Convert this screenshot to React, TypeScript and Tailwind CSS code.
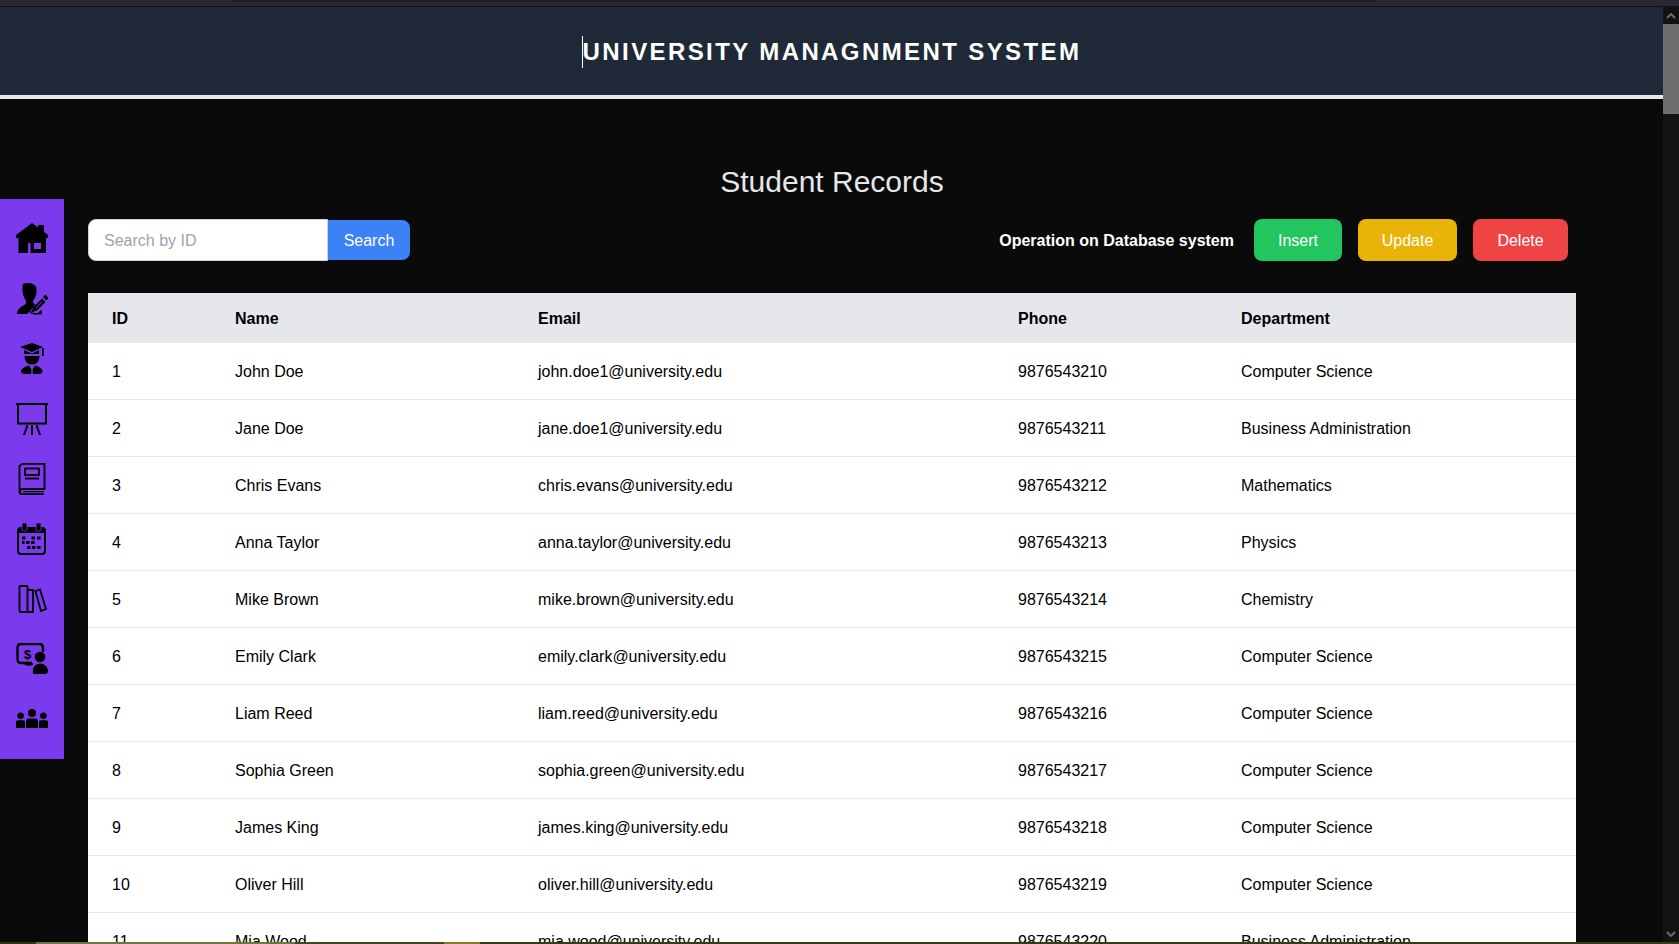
import type { ReactNode } from "react";

const students = [
  ["1", "John Doe", "john.doe1@university.edu", "9876543210", "Computer Science"],
  ["2", "Jane Doe", "jane.doe1@university.edu", "9876543211", "Business Administration"],
  ["3", "Chris Evans", "chris.evans@university.edu", "9876543212", "Mathematics"],
  ["4", "Anna Taylor", "anna.taylor@university.edu", "9876543213", "Physics"],
  ["5", "Mike Brown", "mike.brown@university.edu", "9876543214", "Chemistry"],
  ["6", "Emily Clark", "emily.clark@university.edu", "9876543215", "Computer Science"],
  ["7", "Liam Reed", "liam.reed@university.edu", "9876543216", "Computer Science"],
  ["8", "Sophia Green", "sophia.green@university.edu", "9876543217", "Computer Science"],
  ["9", "James King", "james.king@university.edu", "9876543218", "Computer Science"],
  ["10", "Oliver Hill", "oliver.hill@university.edu", "9876543219", "Computer Science"],
  ["11", "Mia Wood", "mia.wood@university.edu", "9876543220", "Business Administration"],
];

function Icon({ children }: { children: ReactNode }) {
  return (
    <div className="flex h-[60px] items-center justify-center">
      <svg viewBox="0 0 32 32" className="h-8 w-8">
        {children}
      </svg>
    </div>
  );
}

const purple = "#7c3aed";

const sidebarIcons = [
  <Icon key="home">
    <path
      fillRule="evenodd"
      d="M16 0 L22 4.5 V2 H28 V9 L32 12 V15 H30 V30 H2.5 V15 H0 V12 Z M18 20 V26 H25 V20 Z M12 20 V30 H14.5 V20 Z"
    />
  </Icon>,
  <Icon key="user-pen">
    <path d="M7 1 C10 -0.5 18 -0.5 20 4 C21.5 8 20 14 17.5 17 C16.5 19 17 20.5 19 21.5 C23 23 26 25 26 31 H1 C1 26 5 24 9 21.5 C10.5 20.5 10.5 18.5 9.5 17 C7 13 5.5 7 7 1 Z" />
    <path d="M14 33 L33 14" stroke={purple} strokeWidth="7" fill="none" />
    <path d="M15 29.5 L17.5 24.5 L26 15.5 L29.5 19 L21 27.5 Z" />
    <path d="M27 14 L29.5 11.5 L32.5 15 L30.5 17.5 Z" />
    <path d="M14.5 28 C14 31 19 31 26 30.5" stroke="black" strokeWidth="1.4" fill="none" />
    <path d="M20 25 L25.5 19" stroke={purple} strokeWidth="1" />
  </Icon>,
  <Icon key="student">
    <path d="M16 0 L27 4 L16 9 L4 4 Z" />
    <path d="M26 5 H27.8 V13 H26 Z" />
    <path d="M8 7 L16 10.5 L23 7 V11 H8 Z" />
    <path d="M8.5 13 H23.5 C23.5 18 20.5 21.5 16 21.5 C11.5 21.5 8.5 18 8.5 13 Z" />
    <path d="M5 28.5 C5 25 10 23 13 22.5 L15.3 26 V31 H10 C7 31 5 30 5 28.5 Z" />
    <path d="M26.5 28.5 C26.5 25 22 23 19 22.5 L16.7 26 V31 H22 C25 31 26.5 30 26.5 28.5 Z" />
  </Icon>,
  <Icon key="board">
    <g fill="none" stroke="black" strokeWidth="2">
      <path d="M0 1 H32" />
      <path d="M2 1 V20.5 H30 V1" />
      <path d="M16 22 V32 M11.5 22 L8 32 M20.5 22 L24 32" />
    </g>
  </Icon>,
  <Icon key="book">
    <g fill="none" stroke="black" strokeWidth="1.8">
      <path d="M6 0.9 H28.5 V26 H7 C4.5 26 3.5 28 3.5 29 C3.5 30.5 5 31.2 7 31.2 H28" />
      <path d="M3.5 29 V3 L6 0.9" />
      <path d="M7 28.6 H28" strokeWidth="1.2" />
      <rect x="9" y="5.5" width="14" height="6.5" />
    </g>
    <path d="M9 14.5 H23 V16.5 H9 Z" />
  </Icon>,
  <Icon key="calendar">
    <rect x="2" y="5" width="27" height="26" rx="3" fill="none" stroke="black" strokeWidth="2" />
    <path d="M2 5 H29 V10 H2 Z" />
    <rect x="6" y="0" width="5" height="8" rx="1.5" stroke={purple} strokeWidth="0.8" />
    <rect x="20" y="0" width="5" height="8" rx="1.5" stroke={purple} strokeWidth="0.8" />
    <path d="M6 13.5 h3.5 v3 h-3.5 Z M15.5 13.5 h3.5 v3 h-3.5 Z M21 13.5 h3.5 v3 h-3.5 Z M10 18 h3.5 v3 h-3.5 Z M15 18 h3.5 v3 h-3.5 Z M6 18 h2.5 v3 h-2.5 Z M11 23 h3.5 v3 h-3.5 Z M16 23 h3.5 v3 h-3.5 Z M21 23 h3.5 v3 h-3.5 Z" />
  </Icon>,
  <Icon key="books">
    <g fill="none" stroke="black" strokeWidth="1.8">
      <rect x="3.5" y="3" width="8" height="26" rx="1" />
      <path d="M12 7 H17 V29 H12" />
      <path d="M19.5 8 L24 6.5 L30 26 L25 28 Z" />
    </g>
  </Icon>,
  <Icon key="finance">
    <path d="M27 9 V5 C27 2.5 26 1 24 1 H5 C3 1 1.5 2.5 1.5 5 V16 C1.5 18.5 3 20 5 20 H16" fill="none" stroke="black" strokeWidth="2.4" />
    <path d="M8 20 H17 V22 C14 23 11 23 9 22 Z" />
    <text x="8" y="15.5" fontFamily="Liberation Sans, sans-serif" fontSize="13" fontWeight="700">
      $
    </text>
    <circle cx="24" cy="14" r="5.3" />
    <path d="M17 30 C16 24 20 20.5 24 20.5 C28 20.5 32 24 32 28 C32 30 31 31 29 31 H19 C18 31 17.3 31 17 30 Z" />
  </Icon>,
  <Icon key="group">
    <circle cx="16" cy="10" r="4" />
    <path d="M10 25 V18 C10 16 12 15.5 13 15.5 H19 C20 15.5 22 16 22 18 V25 Z" />
    <circle cx="4.6" cy="12.7" r="3.3" />
    <path d="M0 25 V19 C0 18 1 17.2 2 17.2 H7 C8 17.2 9 18 9 19 V25 Z" />
    <circle cx="27.4" cy="12.7" r="3.3" />
    <path d="M23 25 V19 C23 18 24 17.2 25 17.2 H30 C31 17.2 32 18 32 19 V25 Z" />
  </Icon>,
];

export default function App() {
  return (
    <div className="flex h-screen flex-col overflow-hidden bg-[#0a0a0a] font-['Liberation_Sans',Arial,sans-serif] text-black">
      <div className="h-[7px] shrink-0 border-b border-[#111111] bg-[#2b2833]">
        <div className="ml-[232px] h-[2px] w-[1144px] rounded-b bg-[#1f1e24]" />
      </div>

      <div className="flex min-h-0 flex-1">
        <div className="flex min-w-0 flex-1 flex-col">
          <header className="flex h-[92px] shrink-0 items-center justify-center border-b-4 border-[#e5e7eb] bg-[#1f2937] pt-[2px]">
            <h1 className="border-l border-white text-2xl font-bold tracking-[0.1em] text-white">
              UNIVERSITY MANAGNMENT SYSTEM
            </h1>
          </header>

          <div className="flex min-h-0 flex-1 overflow-hidden">
            <aside className="mt-[100px] h-[560px] w-16 shrink-0 bg-[#7c3aed] py-[10px]">{sidebarIcons}</aside>

            <main className="min-w-0 flex-1 pl-6 pr-[87px] pt-[65px]">
              <h2 className="mb-[19px] text-center text-3xl text-[#e5e7eb]">Student Records</h2>

              <div className="mb-8 flex items-center justify-between pr-2">
                <div className="flex items-center">
                  <input
                    placeholder="Search by ID"
                    className="h-[42px] w-60 rounded-l-lg border border-[#d1d5db] bg-white pl-[15px] pr-4 pt-[2px] text-base outline-none placeholder:text-[#9ca3af]"
                  />
                  <button className="h-10 w-[82px] rounded-r-lg bg-[#3b82f6] pt-[2px] text-base text-white">Search</button>
                </div>
                <div className="flex items-center gap-4">
                  <span className="mr-1 pt-[2px] text-base font-bold text-white">Operation on Database system</span>
                  <button className="h-[42px] w-[88px] rounded-lg bg-[#22c55e] pt-[2px] text-base text-white">Insert</button>
                  <button className="h-[42px] w-[99px] rounded-lg bg-[#eab308] pt-[2px] text-base text-white">Update</button>
                  <button className="h-[42px] w-[95px] rounded-lg bg-[#ef4444] pt-[2px] text-base text-white">Delete</button>
                </div>
              </div>

              <table className="w-full table-fixed border-collapse bg-white text-left text-base">
                <colgroup>
                  <col className="w-[123px]" />
                  <col className="w-[303px]" />
                  <col className="w-[480px]" />
                  <col className="w-[223px]" />
                  <col />
                </colgroup>
                <thead className="bg-[#e5e7eb]">
                  <tr>
                    {["ID", "Name", "Email", "Phone", "Department"].map((h) => (
                      <th key={h} className="px-6 pb-3 pt-[14px] font-bold">
                        {h}
                      </th>
                    ))}
                  </tr>
                </thead>
                <tbody>
                  {students.map((row) => (
                    <tr key={row[0]} className="border-b border-[#e5e7eb]">
                      {row.map((cell, i) => (
                        <td key={i} className="px-6 pb-[15px] pt-[17px]">
                          {cell}
                        </td>
                      ))}
                    </tr>
                  ))}
                </tbody>
              </table>
            </main>
          </div>
        </div>

        <div className="flex w-4 shrink-0 flex-col bg-[#131315]">
          <div className="flex h-[17px] items-center justify-center bg-[#121212]">
            <svg viewBox="0 0 10 6" className="h-[6px] w-[10px]">
              <path d="M1 5 L5 1 L9 5" fill="none" stroke="#6b6b6b" strokeWidth="2" />
            </svg>
          </div>
          <div className="h-[90px] bg-[#6e6e6e]" />
          <div className="flex-1" />
          <div className="flex h-[17px] items-center justify-center">
            <svg viewBox="0 0 10 6" className="h-[6px] w-[10px]">
              <path d="M1 1 L5 5 L9 1" fill="none" stroke="#6b6b6b" strokeWidth="2" />
            </svg>
          </div>
        </div>
      </div>

      <div className="flex h-[2px] shrink-0 bg-[#3b3a16]">
        <div className="w-9 bg-[#33331c]" />
        <div className="w-[259px] bg-[#77733f]" />
        <div className="w-[149px] bg-[#4a4520]" />
        <div className="w-9 bg-[#8a7d20]" />
      </div>
    </div>
  );
}
